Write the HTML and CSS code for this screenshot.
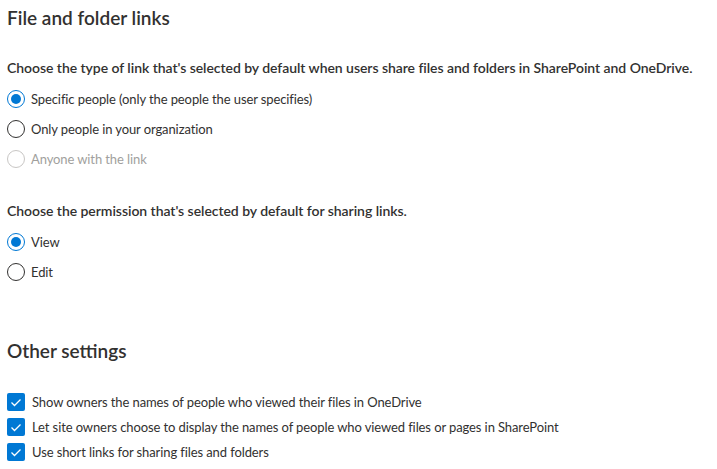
FILE: index.html
```html
<!DOCTYPE html>
<html lang="en">
<head>
    <meta charset="UTF-8">
    <title>Sharing settings</title>
    <link rel="stylesheet" href="styles.css">
</head>
<body>
    <div class="page">
        <h2 class="section-title">File and folder links</h2>

        <div class="group group-first">
            <p class="group-label">Choose the type of link that's selected by default when users share files and folders in SharePoint and OneDrive.</p>
            <div class="radio-list">
                <label class="radio checked"><span class="circle"></span>Specific people (only the people the user specifies)</label>
                <label class="radio"><span class="circle"></span>Only people in your organization</label>
                <label class="radio disabled"><span class="circle"></span>Anyone with the link</label>
            </div>
        </div>

        <div class="group">
            <p class="group-label">Choose the permission that's selected by default for sharing links.</p>
            <div class="radio-list">
                <label class="radio checked"><span class="circle"></span>View</label>
                <label class="radio"><span class="circle"></span>Edit</label>
            </div>
        </div>

        <h2 class="section-title section-other">Other settings</h2>

        <div class="check-list">
            <label class="check"><span class="box"><svg viewBox="0 0 18 18" width="18" height="18"><polyline points="4.5,9.5 7.5,12.5 13.5,6.5" /></svg></span>Show owners the names of people who viewed their files in OneDrive</label>
            <label class="check"><span class="box"><svg viewBox="0 0 18 18" width="18" height="18"><polyline points="4.5,9.5 7.5,12.5 13.5,6.5" /></svg></span>Let site owners choose to display the names of people who viewed files or pages in SharePoint</label>
            <label class="check"><span class="box"><svg viewBox="0 0 18 18" width="18" height="18"><polyline points="4.5,9.5 7.5,12.5 13.5,6.5" /></svg></span>Use short links for sharing files and folders</label>
        </div>
    </div>
</body>
</html>
```

FILE: styles.css
```css
body {
    margin: 0;
    background-color: #ffffff;
    color: #323130;
    font-family: "Segoe UI", Lato, sans-serif;
    font-size: 14px;
}
.page {
    padding: 4px 7px 0 7px;
    display: flex;
    flex-direction: column;
}
.section-title {
    margin: 0;
    font-size: 19px;
    line-height: 28px;
    font-weight: 600;
    color: #323130;
}
.section-other {
    margin-top: 50px;
}
.group {
    margin-top: 27px;
}
.group-first {
    margin-top: 26px;
}
.group-label {
    margin: 0 0 6px 0;
    font-weight: 600;
    line-height: 20px;
    letter-spacing: -0.05px;
    white-space: nowrap;
}
.radio-list, .check-list {
    display: flex;
    flex-direction: column;
}
/* option labels are a bit narrower than the group labels */
.radio, .check {
    font-size: 13px;
    letter-spacing: -0.1px;
}
.radio {
    display: flex;
    align-items: center;
    height: 30px;
}
.circle {
    width: 18px;
    height: 18px;
    box-sizing: border-box;
    border: 1px solid #323130;
    border-radius: 50%;
    margin-right: 6px;
    position: relative;
}
.radio.checked .circle {
    border-color: #0078d4;
}
.radio.checked .circle::after {
    content: "";
    position: absolute;
    left: 3px;
    top: 3px;
    width: 10px;
    height: 10px;
    border-radius: 50%;
    background-color: #0078d4;
}
.radio.disabled {
    color: #a19f9d;
}
.radio.disabled .circle {
    border-color: #c8c6c4;
}
.check-list {
    margin-top: 24px;
}
.check {
    display: flex;
    align-items: center;
    height: 25px;
}
.box {
    width: 18px;
    height: 18px;
    border-radius: 2px;
    background-color: #0078d4;
    margin-right: 7px;
    display: flex;
}
.box polyline {
    fill: none;
    stroke: #ffffff;
    stroke-width: 1.3;
}
```
